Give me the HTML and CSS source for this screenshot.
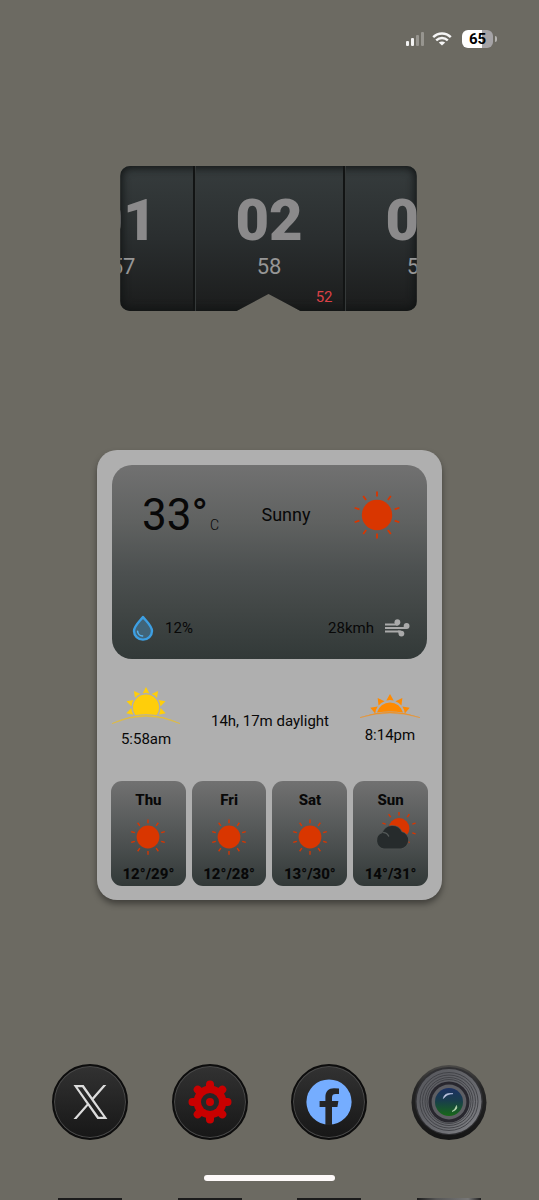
FILE: index.html
```html
<!DOCTYPE html>
<html lang="en">
<head>
  <meta charset="UTF-8">
  <meta name="viewport" content="width=device-width, initial-scale=1.0">
  <title>Home Screen</title>
  <link rel="stylesheet" href="styles.css">
</head>
<body>
  <!-- shared icons -->
  <svg class="defs" width="0" height="0" aria-hidden="true">
    <symbol id="sun" viewBox="0 0 48 48">
      <circle cx="24" cy="24" r="15.2" fill="#d93600"/>
      <g stroke="#d93600" stroke-width="1.8">
        <path id="ray" d="M24 5.5V0.5M24 42.5V47.5"/>
        <use href="#ray" transform="rotate(36 24 24)"/>
        <use href="#ray" transform="rotate(72 24 24)"/>
        <use href="#ray" transform="rotate(108 24 24)"/>
        <use href="#ray" transform="rotate(144 24 24)"/>
      </g>
    </symbol>
  </svg>

  <header class="status-bar">
    <svg class="signal" width="18" height="14" viewBox="0 0 18 14">
      <rect x="0" y="9" width="3" height="5" rx="1" fill="#f2f2f2"/>
      <rect x="5" y="6" width="3" height="8" rx="1" fill="#f2f2f2"/>
      <rect x="10" y="3" width="3" height="11" rx="1" fill="#97958f"/>
      <rect x="15" y="0" width="3" height="14" rx="1" fill="#97958f"/>
    </svg>
    <svg class="wifi" width="20" height="14" viewBox="0 0 20 14" fill="none" stroke="#f5f5f5" stroke-width="2.4">
      <path d="M1.2 5.2C6.2 0.2 13.8 0.2 18.8 5.2"/>
      <path d="M4.2 8.4C7.6 5.2 12.4 5.2 15.8 8.4"/>
      <path d="M10 13.6L6.8 10.6C8.6 9 11.4 9 13.2 10.6Z" fill="#f5f5f5" stroke="none"/>
    </svg>
    <div class="battery"><span class="battery-level">65</span></div>
  </header>

  <main>
    <section class="clock">
      <div class="clock-panel previous">
        <div class="hour">01</div>
        <div class="minute">57</div>
      </div>
      <div class="clock-panel">
        <div class="hour">02</div>
        <div class="minute">58</div>
        <div class="second">52</div>
      </div>
      <div class="clock-panel">
        <div class="hour">03</div>
        <div class="minute">59</div>
      </div>
    </section>

    <section class="weather">
      <div class="current">
        <div class="current-row">
          <div class="temp">33°<span class="unit">C</span></div>
          <div class="condition">Sunny</div>
          <svg width="48" height="48"><use href="#sun"/></svg>
        </div>
        <div class="current-row details">
          <div class="detail">
            <svg width="22" height="26" viewBox="0 0 22 26">
              <path d="M11 2C8 6 2 11 2 16a9 8.6 0 0 0 18 0C20 11 14 6 11 2Z" fill="#416478" stroke="#3d9fe3" stroke-width="2.4" stroke-linejoin="round"/>
              <path d="M5.6 16.2A5.4 5 0 0 0 10.6 21" fill="none" stroke="#55b2ef" stroke-width="1.6" stroke-linecap="round"/>
            </svg>
            <span>12%</span>
          </div>
          <div class="detail">
            <span>28kmh</span>
            <svg width="26" height="18" viewBox="0 0 26 18" fill="none" stroke="#aaa" stroke-width="2">
              <path d="M0 5.5H13.5"/>
              <path d="M0 9H21"/>
              <path d="M0 12.5H16"/>
              <path d="M11 5.5Q13.5 5.5 14 3.2M18 9Q22 9 22 7M13 12.5Q17 12.5 17 15"/>
              <g fill="#aaa" stroke="none">
                <circle cx="12.4" cy="3.2" r="2.9"/>
                <circle cx="21.6" cy="7" r="2.9"/>
                <circle cx="16.4" cy="14.6" r="2.9"/>
              </g>
            </svg>
          </div>
        </div>
      </div>

      <div class="daylight">
        <div class="sun-time">
          <svg width="68" height="36" viewBox="0 0 68 36" fill="#ffce0a">
            <path d="M23.4 27A13 13 0 1 1 44.6 27Q34 25.6 23.4 27Z"/>
            <path id="spike" d="M34 -1L37.4 5.4Q34 4.2 30.6 5.4Z"/>
            <use href="#spike" transform="rotate(36 34 19.5)"/>
            <use href="#spike" transform="rotate(72 34 19.5)"/>
            <use href="#spike" transform="rotate(106 34 19.5)"/>
            <use href="#spike" transform="rotate(-36 34 19.5)"/>
            <use href="#spike" transform="rotate(-72 34 19.5)"/>
            <use href="#spike" transform="rotate(-106 34 19.5)"/>
            <path d="M0 35.6Q34 19.4 68 35.6Q34 21 0 35.6Z" stroke="#e8bd2a" stroke-width="0.5"/>
          </svg>
          <span>5:58am</span>
        </div>
        <div class="duration">14h, 17m daylight</div>
        <div class="sun-time">
          <svg width="60" height="28" viewBox="0 -2 60 28" fill="#ff8a00">
            <path d="M17 18.6A13.4 13.4 0 0 1 43 18.6Q30 16.4 17 18.6Z"/>
            <path id="spike-set" d="M30 0L33.7 6.6Q30 5.6 26.3 6.6Z"/>
            <use href="#spike-set" transform="rotate(36 30 21)"/>
            <use href="#spike-set" transform="rotate(70 30 21)"/>
            <use href="#spike-set" transform="rotate(-36 30 21)"/>
            <use href="#spike-set" transform="rotate(-70 30 21)"/>
            <path d="M0 23.6Q30 13 60 23.6Q30 14.6 0 23.6Z" stroke="#ec922b" stroke-width="0.5"/>
          </svg>
          <span>8:14pm</span>
        </div>
      </div>

      <div class="forecast">
        <div class="day">
          <div>Thu</div>
          <svg width="36" height="36"><use href="#sun"/></svg>
          <div>12°/29°</div>
        </div>
        <div class="day">
          <div>Fri</div>
          <svg width="36" height="36"><use href="#sun"/></svg>
          <div>12°/28°</div>
        </div>
        <div class="day">
          <div>Sat</div>
          <svg width="36" height="36"><use href="#sun"/></svg>
          <div>13°/30°</div>
        </div>
        <div class="day">
          <div>Sun</div>
          <svg width="38" height="36" viewBox="-4 1 38 36">
            <g transform="translate(1 -1)">
              <circle cx="22" cy="11.5" r="10.4" fill="#d93600"/>
              <path d="M22 -1.5V-5M13.8 0.2L11.6 -2.8M30.2 0.2L32.4 -2.8M8.7 7.2L5.4 6.1M35.3 7.2L38.6 6.1M35.3 15.8L38.6 16.9M30.2 22.8L32.4 25.8" stroke="#d93600" stroke-width="1.4"/>
            </g>
            <path d="M8 30.5A8 8 0 0 1 6.5 15A10.3 10.3 0 0 1 25.6 14A8.4 8.4 0 0 1 25 30.5Z" fill="#262b2c" stroke="#4f5453" stroke-width="1.6" paint-order="stroke"/>
            <path d="M7.6 14.6Q11 14.6 12.6 18" fill="none" stroke="#555a59" stroke-width="1.4" stroke-linecap="round"/>
          </svg>
          <div>14°/31°</div>
        </div>
      </div>
    </section>
  </main>

  <nav class="dock">
    <a class="app" href="#" aria-label="X">
      <svg width="35" height="34" viewBox="0 0 24 24" fill="#dcdcdc">
        <path d="M14.258 10.152L23.176 0h-2.113l-7.747 8.813L7.133 0H0l9.352 13.328L0 23.973h2.113l8.176-9.309 6.531 9.309h7.133zM11.363 13.445l-.949-1.328L2.875 1.56h3.246l6.086 8.523.945 1.328 7.91 11.078h-3.246z"/>
      </svg>
    </a>
    <a class="app" href="#" aria-label="Settings">
      <svg width="44" height="44" viewBox="-22 -22 44 44">
        <g stroke="#c90000" stroke-width="8" stroke-linecap="round">
          <path d="M0 -17.5V17.5M-17.5 0H17.5M-12.3 -12.3L12.3 12.3M12.3 -12.3L-12.3 12.3"/>
        </g>
        <circle r="16.4" fill="#c90000"/>
        <circle r="9" fill="#272727"/>
        <circle r="4" fill="#c90000"/>
      </svg>
    </a>
    <a class="app" href="#" aria-label="Facebook">
      <svg width="46" height="46" viewBox="0 0 46 46">
        <circle cx="23" cy="23" r="22.6" fill="#75adff"/>
        <path d="M19.4 46V28H13.6V22H19.4V18C19.4 12 22.6 9.2 28 9.2Q31 9.2 33 9.6V15H29.6Q26 15 26 18.4V22H32.4L31.4 28H26V46Z" fill="#252525"/>
      </svg>
    </a>
    <a class="app camera" href="#" aria-label="Camera">
      <svg width="76" height="76" viewBox="0 0 76 76">
        <defs>
          <linearGradient id="rim" x1="0" y1="0" x2="0" y2="1">
            <stop offset="0" stop-color="#4a4947"/>
            <stop offset="0.3" stop-color="#252525"/>
            <stop offset="1" stop-color="#151515"/>
          </linearGradient>
          <linearGradient id="barrel" x1="0" y1="0" x2="1" y2="1">
            <stop offset="0" stop-color="#55565b"/>
            <stop offset="0.6" stop-color="#68696e"/>
            <stop offset="1" stop-color="#85868a"/>
          </linearGradient>
          <linearGradient id="glass" x1="0" y1="0" x2="0" y2="1">
            <stop offset="0" stop-color="#1c3163"/>
            <stop offset="0.45" stop-color="#193d4c"/>
            <stop offset="1" stop-color="#176817"/>
          </linearGradient>
        </defs>
        <circle cx="38" cy="38.5" r="37.5" fill="url(#rim)"/>
        <circle cx="38" cy="37" r="34" fill="#303033"/>
        <circle cx="38" cy="37.5" r="32.5" fill="url(#barrel)"/>
        <g fill="none" stroke="#3e3f44" stroke-width="0.9">
          <circle cx="38" cy="37.5" r="29"/>
          <circle cx="38" cy="37.5" r="26.5"/>
          <circle cx="38" cy="37.5" r="24"/>
          <circle cx="38" cy="37.5" r="22"/>
        </g>
        <circle cx="38" cy="38" r="20.5" fill="#28272e"/>
        <circle cx="38" cy="38" r="17.4" fill="#5d5e63"/>
        <circle cx="38" cy="38" r="14" fill="url(#glass)"/>
        <path d="M32.4 34.5Q33 28.5 42 29.6Q35.5 30 32.4 34.5Z" fill="#dce2f4" stroke="#a9b4d4" stroke-width="0.8"/>
        <path d="M45.5 41.5Q47 46 41 47.5Q44.5 45.5 45.5 41.5Z" fill="#cfe6c8" stroke="#b9d6b0" stroke-width="0.6"/>
      </svg>
    </a>
  </nav>

  <footer>
    <div class="home-indicator"></div>
    <div class="next-row"><span></span><span></span><span></span><span></span></div>
  </footer>
</body>
</html>
```
FILE: styles.css
```css
* {
  box-sizing: border-box;
}
body {
  margin: 0;
  min-height: 100vh;
  display: flex;
  flex-direction: column;
  font-family: Roboto, "Liberation Sans", sans-serif;
  font-size: 15px;
  line-height: 18px;
  color: #080808;
  background-color: #6c6a62;
}
svg {
  display: block;
  flex: none;
  overflow: visible;
}
.defs {
  position: absolute;
}
main {
  display: flex;
  flex-direction: column;
  align-items: center;
}

/* Status bar */
.status-bar {
  display: flex;
  justify-content: flex-end;
  align-items: center;
  gap: 8px;
  padding: 30px 42px 0;
}
.battery {
  display: flex;
  align-items: center;
  gap: 2px;
  margin-left: 2px;
}
.battery::after {
  content: "";
  width: 2px;
  height: 6px;
  border-radius: 0 2px 2px 0;
  background-color: #b5b3b0;
}
.battery-level {
  width: 31px;
  height: 18px;
  border-radius: 6px;
  text-align: center;
  font-size: 15px;
  font-weight: 700;
  color: #000;
  background: linear-gradient(to right, #fff 65%, #a5a3a6 65%);
}

/* Clock */
.clock {
  width: 55%;
  height: 145px;
  margin-top: 118px;
  margin-right: 2px;
  padding-left: 2px;
  display: flex;
  justify-content: center;
  overflow: hidden;
  border-radius: 10px;
  background: linear-gradient(to bottom, #363c3d, #2a2e2f 50%, #1b1c1c);
  box-shadow: inset 0 0 8px 2px #111414;
  clip-path: polygon(0 0, 100% 0, 100% 100%, calc(50% + 32px) 100%, 50% 128px, calc(50% - 32px) 100%, 0 100%);
}
.clock-panel {
  flex: none;
  width: 150px;
  padding-top: 20px;
  text-align: center;
  border-left: 1px solid #353939;
  border-right: 2px solid #121414;
}
.previous {
  padding-left: 8px;
}
.hour {
  font-size: 58px;
  font-weight: 900;
  line-height: 68px;
  color: #8b8a8b;
}
.minute {
  font-size: 22px;
  line-height: 26px;
  color: #969696;
}
.second {
  margin-top: 8px;
  padding-right: 10px;
  text-align: right;
  color: #dc4146;
}

/* Weather */
.weather {
  width: 64%;
  margin-top: 139px;
  padding: 15px 14px 14px;
  border-radius: 20px;
  background-color: #afafaf;
  box-shadow: 0 4px 6px rgba(0, 0, 0, 0.4);
}
.current {
  height: 194px;
  margin: 0 1px;
  padding: 26px 16px 18px 20px;
  display: flex;
  flex-direction: column;
  justify-content: space-between;
  border-radius: 20px;
  background: linear-gradient(to bottom, #717171, #5f6160 30%, #4c5050 55%, #414645 75%, #323938);
}
.current-row {
  display: flex;
  align-items: center;
  justify-content: space-between;
  padding: 0 10px;
}
.details {
  padding: 0;
}
.temp {
  font-size: 44px;
  line-height: 48px;
}
.unit {
  margin-left: 2px;
  font-size: 14px;
  font-weight: 300;
  line-height: 1;
}
.condition {
  font-size: 18px;
}
.detail {
  display: flex;
  align-items: center;
  gap: 11px;
}
.daylight {
  display: flex;
  align-items: center;
  justify-content: space-between;
  height: 122px;
  padding: 0 8px 4px 1px;
}
.sun-time {
  display: flex;
  flex-direction: column;
  align-items: center;
  gap: 6px;
}
.duration {
  padding-top: 6px;
}
.forecast {
  display: grid;
  grid-template-columns: repeat(4, 1fr);
  gap: 6px;
}
.day {
  display: flex;
  flex-direction: column;
  align-items: center;
  gap: 10px;
  padding: 10px 0 3px;
  border-radius: 11px;
  font-weight: 800;
  background: linear-gradient(to bottom, #717171, #4c5050 60%, #323938);
}

/* Dock */
.dock {
  display: flex;
  justify-content: space-between;
  margin-top: auto;
  padding: 0 52px;
}
.app {
  width: 76px;
  height: 76px;
  display: flex;
  align-items: center;
  justify-content: center;
  border: 2px solid #0d0d0d;
  border-radius: 50%;
  background: linear-gradient(to bottom, #323232, #171717);
  box-shadow: inset 0 0 0 1px #4a4a4a;
}
.camera {
  border: none;
  background: none;
  box-shadow: none;
}
.home-indicator {
  width: 131px;
  height: 6px;
  margin: 35px auto 17px;
  border-radius: 3px;
  background-color: #fdf9f9;
}
.next-row {
  display: flex;
  justify-content: space-between;
  padding: 0 58px;
}
.next-row span {
  width: 64px;
  height: 2px;
  background-color: #1c1c1c;
}
.next-row span:last-child {
  background: linear-gradient(to right, #1c1c1c, #555 30%, #777 80%, #1c1c1c);
}
```
